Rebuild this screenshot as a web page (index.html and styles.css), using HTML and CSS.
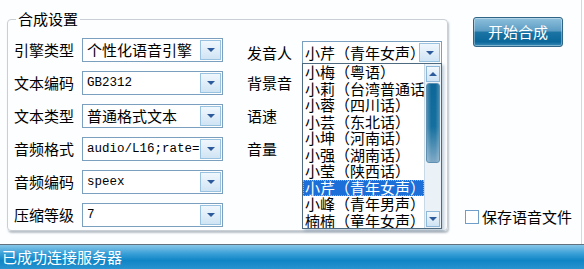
FILE: index.html
```html
<!DOCTYPE html>
<html>
<head>
<meta charset="utf-8">
<link rel="stylesheet" href="styles.css">
</head>
<body>
<div class="app">
  <div class="main">
    <fieldset class="group">
      <legend>合成设置</legend>
      <div class="grid">
        <span class="lbl">引擎类型</span>
        <div class="combo"><span class="val">个性化语音引擎</span><span class="btn"><i class="tri"></i></span></div>
        <span class="lbl lbl-r shift">发音人</span>
        <div class="combo combo-r shift">
          <span class="val">小芹（青年女声）</span><span class="btn"><i class="tri"></i></span>
          <div class="list">
            <div class="items">
              <div class="item">小梅（粤语）</div>
              <div class="item">小莉（台湾普通话）</div>
              <div class="item">小蓉（四川话）</div>
              <div class="item">小芸（东北话）</div>
              <div class="item">小坤（河南话）</div>
              <div class="item">小强（湖南话）</div>
              <div class="item">小莹（陕西话）</div>
              <div class="item sel">小芹（青年女声）</div>
              <div class="item">小峰（青年男声）</div>
              <div class="item">楠楠（童年女声）</div>
            </div>
            <div class="sb">
              <span class="sbtn"><i class="tri-up"></i></span>
              <span class="thumb"></span>
              <span class="track"></span>
              <span class="sbtn"><i class="tri"></i></span>
            </div>
          </div>
        </div>

        <span class="lbl">文本编码</span>
        <div class="combo"><span class="val mono">GB2312</span><span class="btn"><i class="tri"></i></span></div>
        <span class="lbl lbl-r">背景音</span>

        <span class="lbl">文本类型</span>
        <div class="combo"><span class="val">普通格式文本</span><span class="btn"><i class="tri"></i></span></div>
        <span class="lbl lbl-r">语速</span>

        <span class="lbl">音频格式</span>
        <div class="combo"><span class="val mono">audio/L16;rate=16000</span><span class="btn"><i class="tri"></i></span></div>
        <span class="lbl lbl-r">音量</span>

        <span class="lbl">音频编码</span>
        <div class="combo"><span class="val mono">speex</span><span class="btn"><i class="tri"></i></span></div>

        <span class="lbl">压缩等级</span>
        <div class="combo"><span class="val mono">7</span><span class="btn"><i class="tri"></i></span></div>
      </div>
    </fieldset>
    <div class="side">
      <div class="start">开始合成</div>
      <label class="chk"><span class="box"></span><span>保存语音文件</span></label>
    </div>
  </div>
  <div class="status">已成功连接服务器</div>
</div>
</body>
</html>
```

FILE: styles.css
```css
* { box-sizing: border-box; }
html, body { margin: 0; padding: 0; }
body {
  width: 584px;
  height: 269px;
  overflow: hidden;
  background: #fdfeff;
  font-family: "Noto Sans CJK SC", "Noto Sans", sans-serif;
  font-size: 15px;
  color: #000;
}
.app { display: flex; flex-direction: column; height: 269px; }
.main { display: flex; height: 244px; }

.group {
  margin: 9px 0 0 7px;
  width: 441px;
  height: 222px;
  border: 1px solid #c9cfd5;
  border-radius: 4px;
  padding: 9px 4px 0 6px;
  box-shadow: 1px 2px 2px rgba(60, 80, 100, 0.35);
  min-width: 0;
}
.group legend {
  font-size: 15px;
  line-height: 20px;
  padding: 0 2px;
  margin-left: 2px;
}

.grid {
  display: grid;
  grid-template-columns: 68px 141px 24px 55px 140px;
  grid-auto-rows: 24px;
  row-gap: 9px;
}
.lbl { grid-column: 1; line-height: 24px; white-space: nowrap; }
.combo { grid-column: 2; }
.lbl-r { grid-column: 4; }
.combo-r { grid-column: 5; }
.shift { margin-top: 3px; }
.combo-r.shift { height: 23px; }

.combo {
  display: flex;
  height: 24px;
  border: 1px solid #7b9fbe;
  background: #fff;
  position: relative;
}
.val {
  flex: 1;
  min-width: 0;
  padding-left: 4px;
  line-height: 22px;
  white-space: nowrap;
  overflow: hidden;
}
.combo-r .val { line-height: 21px; padding-left: 2px; }
.mono { font-family: "Liberation Mono", monospace; font-size: 12.5px; }
.btn {
  flex: none;
  width: 21px;
  margin: 1px;
  border: 1px solid #99c1e0;
  background: linear-gradient(#f0f7fd, #d0e4f4);
  display: flex;
  align-items: center;
  justify-content: center;
}
.tri {
  width: 0; height: 0;
  border-left: 4px solid transparent;
  border-right: 4px solid transparent;
  border-top: 4px solid #2c5a9a;
}
.tri-up {
  width: 0; height: 0;
  border-left: 4px solid transparent;
  border-right: 4px solid transparent;
  border-bottom: 4px solid #2c5a9a;
}

.list {
  position: absolute;
  left: -1px;
  top: 100%;
  width: 140px;
  height: 166px;
  border: 1px solid #4d6a80;
  background: #fff;
  display: flex;
  box-shadow: 2px 2px 3px rgba(70, 110, 140, 0.35);
  z-index: 2;
}
.items { flex: 1; min-width: 0; overflow: hidden; }
.item {
  height: 16.5px;
  line-height: 16.5px;
  padding-left: 2px;
  white-space: nowrap;
  overflow: hidden;
}
.item.sel {
  background: #1c6fd9;
  color: #fff;
  outline: 1px dotted #f0a040;
  outline-offset: -1px;
}
.sb {
  flex: none;
  width: 17px;
  display: flex;
  flex-direction: column;
  background: #eaf2f8;
  border-left: 1px solid #c8d8e5;
  padding: 2px 0 1px;
}
.sbtn {
  height: 16px;
  margin: 0 1px;
  border: 1px solid #8fb8d8;
  background: linear-gradient(#f2f8fd, #cfe3f3);
  display: flex;
  align-items: center;
  justify-content: center;
}
.thumb {
  height: 80px;
  margin: 1px 1px 0;
  border-radius: 3px;
  border: 1px solid #5e8fb0;
  background:
    linear-gradient(90deg, rgba(255,255,255,0.25), rgba(255,255,255,0) 35%, rgba(255,255,255,0) 70%, rgba(255,255,255,0.2)),
    linear-gradient(#0c6698, #16709f 55%, #7fa9c6);
}
.track { flex: 1; }

.side {
  flex: 1;
  display: flex;
  flex-direction: column;
  justify-content: space-between;
  align-items: flex-start;
  border-right: 1px solid #cbdbe6;
  margin-right: 2px;
  padding-bottom: 17px;
}
.start {
  margin: 17px 0 0 25px;
  width: 90px;
  height: 30px;
  border: 1px solid #2f6587;
  border-radius: 3px;
  color: #fff;
  font-size: 15px;
  line-height: 28px;
  text-align: center;
  background: linear-gradient(#8ec0dc 0%, #5d9dc4 45%, #1a73a3 52%, #0b679a 85%, #3a8bb7 100%);
  box-shadow: inset 0 0 0 1px rgba(255, 255, 255, 0.35);
}
.chk {
  display: flex;
  align-items: center;
  margin-left: 17px;
  line-height: 20px;
  white-space: nowrap;
}
.box {
  width: 14px;
  height: 14px;
  border: 1px solid #6f9fc8;
  background: #fff;
  margin-right: 3px;
}

.status {
  height: 25px;
  border-top: 1px solid #61717e;
  background: linear-gradient(#86c6e8, #3aa0d8 35%, #0f85c6 65%, #2893cf);
  color: #fff;
  font-size: 15px;
  line-height: 24px;
  padding-left: 2px;
  white-space: nowrap;
}
```
